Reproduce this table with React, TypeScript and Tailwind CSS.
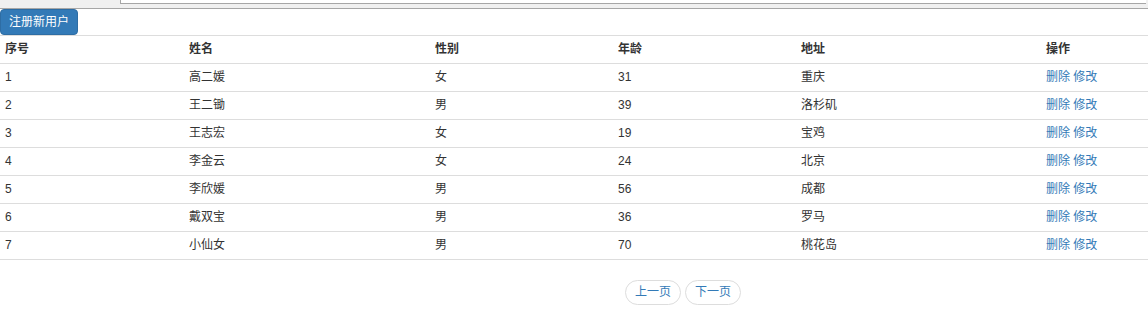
const rows = [
  { id: 1, name: "高二媛", sex: "女", age: 31, addr: "重庆" },
  { id: 2, name: "王二锄", sex: "男", age: 39, addr: "洛杉矶" },
  { id: 3, name: "王志宏", sex: "女", age: 19, addr: "宝鸡" },
  { id: 4, name: "李金云", sex: "女", age: 24, addr: "北京" },
  { id: 5, name: "李欣媛", sex: "男", age: 56, addr: "成都" },
  { id: 6, name: "戴双宝", sex: "男", age: 36, addr: "罗马" },
  { id: 7, name: "小仙女", sex: "男", age: 70, addr: "桃花岛" },
]

export default function App() {
  return (
    <div
      className="w-[1148px] h-[318px] bg-white text-[12px] leading-[17px] text-[#333]"
      style={{ fontFamily: '"Liberation Sans", "Noto Sans CJK SC", sans-serif' }}
    >
      {/* browser strip */}
      <div className="h-[9px] bg-[#f0f0f0] border-b border-[#a6a6a6] flex">
        <div className="w-[120px]" />
        <div className="flex-1 mr-[2px] h-[4px] bg-white border-l border-b border-[#a6a6a6]" />
      </div>

      <button className="h-[26px] px-[8px] bg-[#337ab7] border border-[#2e6da4] rounded-[4px] text-white text-[12px] leading-[17px]">
        注册新用户
      </button>

      <table className="w-full border-collapse">
        <thead>
          <tr className="border-t border-[#ddd]">
            <th className="w-[184px] h-[28px] px-[5px] text-left font-bold">序号</th>
            <th className="w-[246px] px-[5px] text-left font-bold">姓名</th>
            <th className="w-[183px] px-[5px] text-left font-bold">性别</th>
            <th className="w-[183px] px-[5px] text-left font-bold">年龄</th>
            <th className="w-[245px] px-[5px] text-left font-bold">地址</th>
            <th className="px-[5px] text-left font-bold">操作</th>
          </tr>
        </thead>
        <tbody>
          {rows.map((r) => (
            <tr key={r.id} className="border-t border-b border-[#ddd]">
              <td className="h-[28px] px-[5px]">{r.id}</td>
              <td className="px-[5px]">{r.name}</td>
              <td className="px-[5px]">{r.sex}</td>
              <td className="px-[5px]">{r.age}</td>
              <td className="px-[5px]">{r.addr}</td>
              <td className="px-[5px] text-[#337ab7]">
                <a href="#">删除</a> <a href="#">修改</a>
              </td>
            </tr>
          ))}
        </tbody>
      </table>

      {/* pager */}
      <div className="flex gap-[4px] pl-[625px] mt-[20px]">
        <a href="#" className="w-[56px] h-[25px] flex items-center justify-center border border-[#ddd] rounded-[15px] text-[#337ab7]">
          上一页
        </a>
        <a href="#" className="w-[56px] h-[25px] flex items-center justify-center border border-[#ddd] rounded-[15px] text-[#337ab7]">
          下一页
        </a>
      </div>
    </div>
  )
}
